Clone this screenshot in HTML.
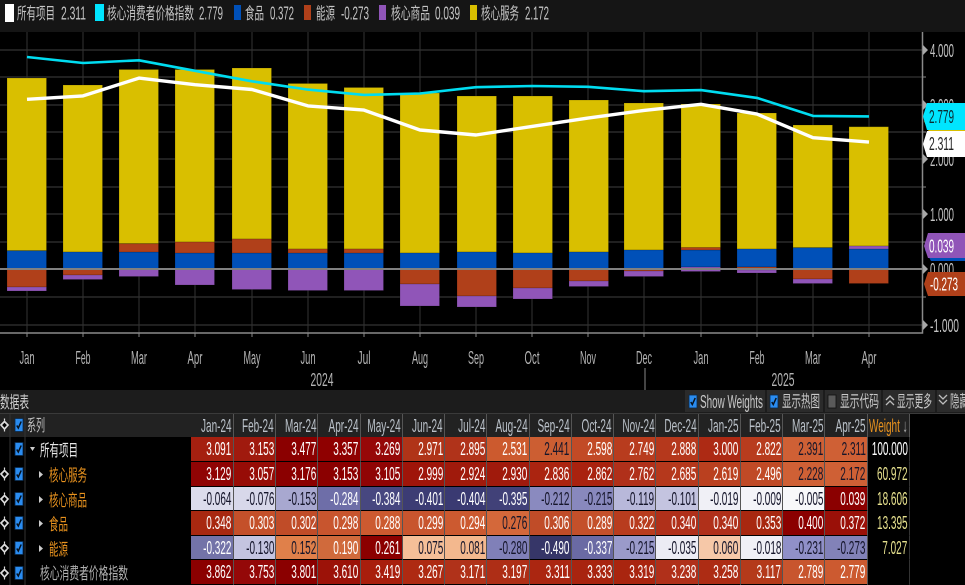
<!DOCTYPE html>
<html lang="zh">
<head>
<meta charset="utf-8">
<title>数据表</title>
<style>
html,body{margin:0;padding:0;background:#000;width:965px;height:585px;overflow:hidden}
body{position:relative;font-family:"Liberation Sans","Noto Sans CJK SC",sans-serif}
svg{position:absolute;left:0;top:0}
svg,table{filter:blur(.35px)}
svg text{font-family:"Liberation Sans","Noto Sans CJK SC",sans-serif;stroke:currentColor;stroke-width:0}
.c{font-size:16.500px}
.n{font-size:18.500px}
table{position:absolute;left:0;top:414px;width:909px;border-collapse:collapse;table-layout:fixed}
td,th{position:relative;padding:0;border-right:1px solid #555;border-bottom:1px solid rgba(0,0,0,.25);overflow:hidden;color:#fff;font-weight:normal;font-size:18.500px}
th{background:#222;color:#b9c0c8;height:22px;border-bottom:0}
tr{height:24.6px}
tr.h{height:23px}
td.l,th.l{background:#000;border:0}
th.l{background:#222}
td.d{color:#15152a}
td.w{background:#000;color:#e6e08e;border-right:1px solid #333}
td.e{background:#000;border-right:1px solid #333}
i{position:absolute;right:1px;top:0;line-height:24px;font-style:normal;white-space:nowrap;transform:scaleX(.54);transform-origin:right center}
</style>
</head>
<body>
<svg width="965" height="585" viewBox="0 0 965 585" xmlns="http://www.w3.org/2000/svg">
<defs>
<g id="dm"><path d="M4.5-4.5L8-1 4.5 3 1-1Z" transform="translate(0 1)" fill="#000" stroke="#ddd" stroke-width="1.7"/><path d="M4.5-6.5v2M4.5 4.5v2" stroke="#ddd" stroke-width="1.2"/></g>
<g id="cb"><rect x="15" y="-6.5" width="8" height="13" fill="#2a8cf0" stroke="#0b2a4a" stroke-width=".8"/><path d="M16.800.5L18.300 3 21.200-3.500" fill="none" stroke="#06121f" stroke-width="1.500"/></g>
</defs>

<!-- legend -->
<rect x="0" y="0" width="965" height="32" fill="#151515"/>
<rect x="5" y="4" width="9" height="18" fill="#fff"/>
<rect x="95" y="4" width="9" height="17" fill="#00e5ff"/>
<rect x="234" y="5" width="7" height="15" fill="#0050b8"/>
<rect x="304" y="5" width="7" height="15" fill="#b0401a"/>
<rect x="379" y="5" width="7" height="15" fill="#9055b8"/>
<rect x="470" y="5" width="7" height="15" fill="#d9bf00"/>
<g fill="#c4c4c4">
<text class="c" x="17" y="19" textLength="38" lengthAdjust="spacingAndGlyphs">所有项目</text>
<text class="n" x="61" y="19.500" textLength="25" lengthAdjust="spacingAndGlyphs">2.311</text>
<text class="c" x="107" y="19" textLength="87" lengthAdjust="spacingAndGlyphs">核心消费者价格指数</text>
<text class="n" x="199" y="19.500" textLength="24" lengthAdjust="spacingAndGlyphs">2.779</text>
<text class="c" x="245" y="19" textLength="19" lengthAdjust="spacingAndGlyphs">食品</text>
<text class="n" x="270" y="19.500" textLength="24" lengthAdjust="spacingAndGlyphs">0.372</text>
<text class="c" x="316" y="19" textLength="19" lengthAdjust="spacingAndGlyphs">能源</text>
<text class="n" x="341" y="19.500" textLength="28" lengthAdjust="spacingAndGlyphs">-0.273</text>
<text class="c" x="391" y="19" textLength="39" lengthAdjust="spacingAndGlyphs">核心商品</text>
<text class="n" x="435" y="19.500" textLength="25" lengthAdjust="spacingAndGlyphs">0.039</text>
<text class="c" x="481" y="19" textLength="38" lengthAdjust="spacingAndGlyphs">核心服务</text>
<text class="n" x="525" y="19.500" textLength="24" lengthAdjust="spacingAndGlyphs">2.172</text>
</g>

<!-- grid -->
<path d="M0 50H922M0 77H922M0 105H922M0 132H922M0 159H922M0 187H922M0 214H922M0 242H922M0 297H922M0 325H922" stroke="#333" stroke-width="1.300" fill="none"/>
<path d="M27 32V333M83 32V333M139 32V333M195 32V333M252 32V333M308 32V333M364 32V333M420 32V333M476 32V333M532 32V333M588 32V333M644 32V333M701 32V333M757 32V333M813 32V333M869 32V333" stroke="#333" stroke-width="1" fill="none"/>

<!-- bars -->
<g stroke="#000" stroke-opacity=".22" stroke-width=".8">
<path fill="#d9bf00" d="M7 78h39.500V250.700H7zM63 85h39.500V252H63zM119 69.500h39.500V243.700H119zM175 69.500h39.500V242H175zM232 68h39.500V239H232zM288 83.500h39.500V249H288zM344 87.500h39.500V249H344zM400 93h39.500V253H400zM457 96h39.500V252H457zM513 96h39.500V253H513zM569 100h39.500V252H569zM624 103h39.500V250H624zM681 104h39.500V247.500H681zM737 113h39.500V249H737zM793 125h39.500V247.700H793zM849 126.700h39.500V246H849z"/>
<path fill="#0050b8" d="M7 250.700h39.500V269H7zM63 252h39.500V269H63zM119 252h39.500V269H119zM175 253h39.500V269H175zM232 253h39.500V269H232zM288 253h39.500V269H288zM344 253h39.500V269H344zM400 253h39.500V269H400zM457 252h39.500V269H457zM513 253h39.500V269H513zM569 252h39.500V269H569zM624 250h39.500V269H624zM681 250h39.500V267H681zM737 249h39.500V267H737zM793 247.700h39.500V269H793zM849 249h39.500V269H849z"/>
<path fill="#b0401a" d="M7 269h39.500V287H7zM63 269h39.500V275H63zM119 243.700h39.500V252H119zM175 242h39.500V253H175zM232 239h39.500V253H232zM288 249h39.500V253H288zM344 249h39.500V253H344zM400 269h39.500V284H400zM457 269h39.500V296H457zM513 269h39.500V288H513zM569 269h39.500V281H569zM624 269h39.500V271H624zM681 247.500h39.500V250H681zM737 267h39.500V270H737zM793 269h39.500V279H793zM849 269h39.500V283.500H849z"/>
<path fill="#9055b8" d="M7 287h39.500V291H7zM63 275h39.500V279.500H63zM119 269h39.500V276.500H119zM175 269h39.500V285H175zM232 269h39.500V289.500H232zM288 269h39.500V290.500H288zM344 269h39.500V290.500H344zM400 284h39.500V306H400zM457 296h39.500V307H457zM513 288h39.500V299H513zM569 281h39.500V286.500H569zM624 271h39.500V276.500H624zM681 267h39.500V271.500H681zM737 270h39.500V273H737zM793 279h39.500V283.500H793zM849 246h39.500V249H849z"/>
</g>

<!-- zero line and axes -->
<path d="M0 269H922" stroke="#808080" stroke-width="2"/>
<path d="M0 333H922.500V32" fill="none" stroke="#8a8a8a" stroke-width="1.500"/>
<path d="M27 333v4M83 333v4M139 333v4M195 333v4M252 333v4M308 333v4M364 333v4M420 333v4M476 333v4M532 333v4M588 333v4M644 333v4M701 333v4M757 333v4M813 333v4M869 333v4M645 368V390" stroke="#888" stroke-width="1"/>

<!-- lines -->
<polyline fill="none" stroke="#00dcf0" stroke-width="2.600" stroke-linejoin="round" points="27,57 83,63 139,60.300 195,70.800 252,81.300 308,89.600 364,94.900 420,93.500 476,87.200 532,86 588,86.800 644,91.200 701,90.100 757,97.900 813,115.900 869,116.400"/>
<polyline fill="none" stroke="#fff" stroke-width="3.400" stroke-linejoin="round" points="27,99.300 83,95.900 139,78.100 195,84.700 252,89.500 308,105.900 364,110.100 420,130 476,135 532,126.400 588,118.100 644,110.400 701,104.300 757,114.100 813,137.700 869,142.100"/>

<!-- y axis -->
<path d="M923 45l5 5-5 5zM923 100l5 5-5 5zM923 154l5 5-5 5zM923 209l5 5-5 5zM923 264l5 5-5 5zM923 320l5 5-5 5z" fill="#a8a8a8"/>
<path d="M923 77h3M923 132h3M923 187h3M923 242h3M923 297h3" stroke="#888"/>
<g fill="#c4c4c4" class="n">
<text class="n" x="930" y="57" textLength="24" lengthAdjust="spacingAndGlyphs">4.000</text>
<text class="n" x="930" y="112" textLength="24" lengthAdjust="spacingAndGlyphs">3.000</text>
<text class="n" x="930" y="166" textLength="24" lengthAdjust="spacingAndGlyphs">2.000</text>
<text class="n" x="930" y="221" textLength="24" lengthAdjust="spacingAndGlyphs">1.000</text>
<text class="n" x="930" y="276" textLength="24" lengthAdjust="spacingAndGlyphs">0.000</text>
<text class="n" x="930" y="332" textLength="29" lengthAdjust="spacingAndGlyphs">-1.000</text>
</g>

<!-- tags -->
<path d="M924 121l5-5h36v16h-36z" fill="#d9bf00"/>
<path d="M923 116.500L927 103H965V130H927Z" fill="#00e5ff"/>
<path d="M923 144L927 131H965V157H927Z" fill="#fff"/>
<path d="M925 250L930 236H965V261H931Z" fill="#0050b8"/>
<path d="M924 246L928 233H965V258H928Z" fill="#9055b8"/>
<path d="M924 284L928 272H965V296H928Z" fill="#b0401a"/>
<text class="n" x="929" y="123" fill="#0c2a30" textLength="25" lengthAdjust="spacingAndGlyphs">2.779</text>
<text class="n" x="929" y="150" fill="#222" textLength="25" lengthAdjust="spacingAndGlyphs">2.311</text>
<text class="n" x="929" y="252.500" fill="#fff" textLength="25" lengthAdjust="spacingAndGlyphs">0.039</text>
<text class="n" x="930" y="290.500" fill="#fff" textLength="28" lengthAdjust="spacingAndGlyphs">-0.273</text>

<!-- x labels -->
<g fill="#b4b4b4" text-anchor="middle">
<text class="n" x="27" y="364" textLength="15" lengthAdjust="spacingAndGlyphs">Jan</text>
<text class="n" x="83" y="364" textLength="15" lengthAdjust="spacingAndGlyphs">Feb</text>
<text class="n" x="139" y="364" textLength="16" lengthAdjust="spacingAndGlyphs">Mar</text>
<text class="n" x="195" y="364" textLength="15" lengthAdjust="spacingAndGlyphs">Apr</text>
<text class="n" x="252" y="364" textLength="17" lengthAdjust="spacingAndGlyphs">May</text>
<text class="n" x="308" y="364" textLength="15" lengthAdjust="spacingAndGlyphs">Jun</text>
<text class="n" x="364" y="364" textLength="13" lengthAdjust="spacingAndGlyphs">Jul</text>
<text class="n" x="420" y="364" textLength="16" lengthAdjust="spacingAndGlyphs">Aug</text>
<text class="n" x="476" y="364" textLength="16" lengthAdjust="spacingAndGlyphs">Sep</text>
<text class="n" x="532" y="364" textLength="15" lengthAdjust="spacingAndGlyphs">Oct</text>
<text class="n" x="588" y="364" textLength="16" lengthAdjust="spacingAndGlyphs">Nov</text>
<text class="n" x="644" y="364" textLength="16" lengthAdjust="spacingAndGlyphs">Dec</text>
<text class="n" x="701" y="364" textLength="15" lengthAdjust="spacingAndGlyphs">Jan</text>
<text class="n" x="757" y="364" textLength="15" lengthAdjust="spacingAndGlyphs">Feb</text>
<text class="n" x="813" y="364" textLength="16" lengthAdjust="spacingAndGlyphs">Mar</text>
<text class="n" x="869" y="364" textLength="15" lengthAdjust="spacingAndGlyphs">Apr</text>
<text class="n" x="322" y="386" textLength="23" lengthAdjust="spacingAndGlyphs">2024</text>
<text class="n" x="783" y="386" textLength="23" lengthAdjust="spacingAndGlyphs">2025</text>
</g>

<!-- title bar -->
<rect x="0" y="390" width="965" height="24" fill="#1c1c1c"/>
<rect x="0" y="413" width="965" height="1" fill="#3a3a3a"/>
<text class="c" x="0" y="408" fill="#d0d0d0" textLength="29" lengthAdjust="spacingAndGlyphs">数据表</text>
<g fill="#2b2b2b">
<rect x="685" y="390" width="80" height="22"/>
<rect x="767" y="390" width="56" height="22"/>
<rect x="825" y="390" width="56" height="22"/>
<rect x="883" y="390" width="52" height="22"/>
<rect x="937" y="390" width="28" height="22"/>
</g>
<rect x="689" y="395" width="8" height="13" fill="#2a8cf0" stroke="#0b2a4a" stroke-width=".8"/>
<path d="M690.800 402l1.500 2.500 2.900-6.500" fill="none" stroke="#06121f" stroke-width="1.500"/>
<rect x="770" y="395" width="8" height="13" fill="#2a8cf0" stroke="#0b2a4a" stroke-width=".8"/>
<path d="M771.800 402l1.500 2.500 2.900-6.500" fill="none" stroke="#06121f" stroke-width="1.500"/>
<rect x="828" y="395" width="8" height="13" fill="#5a5a5a" stroke="#111" stroke-width=".8"/>
<path d="M886 400l4-4 4 4M886 405l4-4 4 4M939 395l4 4 4-4M939 400l4 4 4-4" fill="none" stroke="#bbb" stroke-width="1.300"/>
<g fill="#c8c8c8">
<text class="n" x="700" y="408" textLength="63" lengthAdjust="spacingAndGlyphs">Show Weights</text>
<text class="c" x="782" y="407" textLength="38" lengthAdjust="spacingAndGlyphs">显示热图</text>
<text class="c" x="840" y="407" textLength="39" lengthAdjust="spacingAndGlyphs">显示代码</text>
<text class="c" x="897" y="407" textLength="35" lengthAdjust="spacingAndGlyphs">显示更多</text>
<text class="c" x="950" y="407" textLength="19" lengthAdjust="spacingAndGlyphs">隐藏</text>
</g>
</svg>

<table>
<colgroup><col style="width:191px"><col span="16" style="width:42.250px"><col style="width:42px"></colgroup>
<tr class="h"><th class="l"></th><th><i>Jan-24</i></th><th><i>Feb-24</i></th><th><i>Mar-24</i></th><th><i>Apr-24</i></th><th><i>May-24</i></th><th><i>Jun-24</i></th><th><i>Jul-24</i></th><th><i>Aug-24</i></th><th><i>Sep-24</i></th><th><i>Oct-24</i></th><th><i>Nov-24</i></th><th><i>Dec-24</i></th><th><i>Jan-25</i></th><th><i>Feb-25</i></th><th><i>Mar-25</i></th><th><i>Apr-25</i></th><th style="color:#e8921e"><i>Weight <span style="color:#aaa">↓</span></i></th></tr>
<tr><td class="l"></td><td style="background:#a52010"><i>3.091</i></td><td style="background:#a01a0e"><i>3.153</i></td><td style="background:#8b0000"><i>3.477</i></td><td style="background:#8f0000"><i>3.357</i></td><td style="background:#960808"><i>3.269</i></td><td style="background:#b03418"><i>2.971</i></td><td style="background:#b0331a"><i>2.895</i></td><td style="background:#cc5a2e"><i>2.531</i></td><td class="d" style="background:#cc5e32"><i>2.441</i></td><td style="background:#c24a26"><i>2.598</i></td><td style="background:#b83c1e"><i>2.749</i></td><td style="background:#b5381c"><i>2.888</i></td><td style="background:#ad2a14"><i>3.000</i></td><td style="background:#b83c1e"><i>2.822</i></td><td class="d" style="background:#cf6035"><i>2.391</i></td><td class="d" style="background:#cf6035"><i>2.311</i></td><td class="w" style="color:#fff"><i>100.000</i></td></tr>
<tr><td class="l"></td><td style="background:#900404"><i>3.129</i></td><td style="background:#970c06"><i>3.057</i></td><td style="background:#8b0000"><i>3.176</i></td><td style="background:#8b0000"><i>3.153</i></td><td style="background:#900404"><i>3.105</i></td><td style="background:#9f1509"><i>2.999</i></td><td style="background:#a01a0c"><i>2.924</i></td><td style="background:#a01a0c"><i>2.930</i></td><td style="background:#ab2410"><i>2.836</i></td><td style="background:#a9220f"><i>2.862</i></td><td style="background:#b0301a"><i>2.762</i></td><td style="background:#b5381c"><i>2.685</i></td><td style="background:#ba401f"><i>2.619</i></td><td style="background:#c04a26"><i>2.496</i></td><td class="d" style="background:#cf6035"><i>2.228</i></td><td class="d" style="background:#cf6035"><i>2.172</i></td><td class="w"><i>60.972</i></td></tr>
<tr><td class="l"></td><td class="d" style="background:#dcdcec"><i>-0.064</i></td><td class="d" style="background:#d8d8ea"><i>-0.076</i></td><td class="d" style="background:#a8a8d0"><i>-0.153</i></td><td style="background:#6e6ea8"><i>-0.284</i></td><td style="background:#474780"><i>-0.384</i></td><td style="background:#3c3c74"><i>-0.401</i></td><td style="background:#3a3a72"><i>-0.404</i></td><td style="background:#414178"><i>-0.395</i></td><td class="d" style="background:#8a8abf"><i>-0.212</i></td><td class="d" style="background:#8888bd"><i>-0.215</i></td><td class="d" style="background:#b8b8da"><i>-0.119</i></td><td class="d" style="background:#c4c4e0"><i>-0.101</i></td><td class="d" style="background:#f0f0f6"><i>-0.019</i></td><td class="d" style="background:#f4f4f8"><i>-0.009</i></td><td class="d" style="background:#f8f8fa"><i>-0.005</i></td><td style="background:#8b0000"><i>0.039</i></td><td class="w"><i>18.606</i></td></tr>
<tr><td class="l"></td><td style="background:#a82810"><i>0.348</i></td><td style="background:#c4502a"><i>0.303</i></td><td style="background:#c04c28"><i>0.302</i></td><td style="background:#c8552e"><i>0.298</i></td><td style="background:#cc5a30"><i>0.288</i></td><td style="background:#c8552e"><i>0.299</i></td><td style="background:#cc5a30"><i>0.294</i></td><td class="d" style="background:#d4683a"><i>0.276</i></td><td style="background:#c04c28"><i>0.306</i></td><td style="background:#c4502a"><i>0.289</i></td><td style="background:#b83c1e"><i>0.322</i></td><td style="background:#b0301a"><i>0.340</i></td><td style="background:#b0301a"><i>0.340</i></td><td style="background:#a82810"><i>0.353</i></td><td style="background:#8b0000"><i>0.400</i></td><td style="background:#9a1008"><i>0.372</i></td><td class="w"><i>13.395</i></td></tr>
<tr><td class="l"></td><td style="background:#7373a8"><i>-0.322</i></td><td class="d" style="background:#c4c4e0"><i>-0.130</i></td><td class="d" style="background:#e0804a"><i>0.152</i></td><td style="background:#d06a3c"><i>0.190</i></td><td style="background:#8b0000"><i>0.261</i></td><td class="d" style="background:#f5bf98"><i>0.075</i></td><td class="d" style="background:#f3b88e"><i>0.081</i></td><td class="d" style="background:#8080b8"><i>-0.280</i></td><td style="background:#363668"><i>-0.490</i></td><td style="background:#6a6aa4"><i>-0.337</i></td><td class="d" style="background:#9a9aca"><i>-0.215</i></td><td class="d" style="background:#ececf4"><i>-0.035</i></td><td class="d" style="background:#f6c8a8"><i>0.060</i></td><td class="d" style="background:#f0f0f6"><i>-0.018</i></td><td class="d" style="background:#9090c8"><i>-0.231</i></td><td class="d" style="background:#8282b8"><i>-0.273</i></td><td class="w"><i>7.027</i></td></tr>
<tr><td class="l"></td><td style="background:#8b0000"><i>3.862</i></td><td style="background:#940808"><i>3.753</i></td><td style="background:#8b0000"><i>3.801</i></td><td style="background:#9c1208"><i>3.610</i></td><td style="background:#a81e0c"><i>3.419</i></td><td style="background:#ae2a12"><i>3.267</i></td><td style="background:#b0321a"><i>3.171</i></td><td style="background:#ae2e16"><i>3.197</i></td><td style="background:#ab2611"><i>3.311</i></td><td style="background:#a8240f"><i>3.333</i></td><td style="background:#a9250f"><i>3.319</i></td><td style="background:#b0301a"><i>3.238</i></td><td style="background:#ad2c14"><i>3.258</i></td><td style="background:#b43a1a"><i>3.117</i></td><td style="background:#c8552e"><i>2.789</i></td><td style="background:#cc5a30"><i>2.779</i></td><td class="e"></td></tr>
</table>

<!-- left columns overlay -->
<svg width="191" height="585" viewBox="0 0 191 585" xmlns="http://www.w3.org/2000/svg">
<path d="M10 414V585M25 414V585" stroke="#333"/>
<use href="#dm" x="0" y="425"/><use href="#cb" x="0" y="425"/>
<use href="#cb" x="0" y="449"/>
<use href="#dm" x="0" y="474"/><use href="#cb" x="0" y="474"/>
<use href="#dm" x="0" y="499"/><use href="#cb" x="0" y="499"/>
<use href="#dm" x="0" y="523"/><use href="#cb" x="0" y="523"/>
<use href="#dm" x="0" y="548"/><use href="#cb" x="0" y="548"/>
<use href="#dm" x="0" y="573"/><use href="#cb" x="0" y="573"/>
<path d="M30 447h5l-2.500 4zM39 471l4 3.500-4 3.500zM39 496l4 3.500-4 3.500zM39 520l4 3.500-4 3.500zM39 545l4 3.500-4 3.500z" fill="#ccc"/>
<text class="c" x="27" y="431" fill="#c0c0c0" textLength="18" lengthAdjust="spacingAndGlyphs">系列</text>
<text class="c" x="40" y="456" fill="#e8e8e8" textLength="38" lengthAdjust="spacingAndGlyphs">所有项目</text>
<g fill="#e8921e">
<text class="c" x="49" y="481" textLength="38" lengthAdjust="spacingAndGlyphs">核心服务</text>
<text class="c" x="49" y="506" textLength="38" lengthAdjust="spacingAndGlyphs">核心商品</text>
<text class="c" x="49" y="530" textLength="19" lengthAdjust="spacingAndGlyphs">食品</text>
<text class="c" x="49" y="555" textLength="19" lengthAdjust="spacingAndGlyphs">能源</text>
</g>
<text class="c" x="40" y="579" fill="#b0b0b0" textLength="88" lengthAdjust="spacingAndGlyphs">核心消费者价格指数</text>
</svg>
</body>
</html>
